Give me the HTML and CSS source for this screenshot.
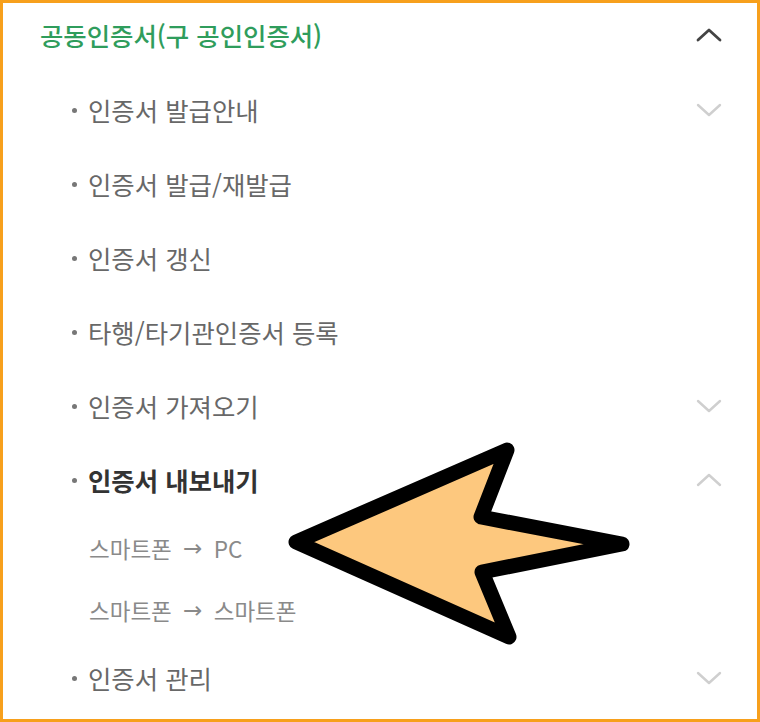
FILE: index.html
```html
<!DOCTYPE html>
<html lang="ko">
<head>
<meta charset="utf-8">
<link rel="stylesheet" href="styles.css">
</head>
<body>
<div class="frame">
  <div class="menu">
    <div class="head">
      <span class="head-title">공동인증서(구 공인인증서)</span>
      <svg class="chev chev-dark" viewBox="0 0 26 14"><polyline points="2,12 13,2 24,12"/></svg>
    </div>
    <div class="item"><span class="label">인증서 발급안내</span><svg class="chev" viewBox="0 0 26 14"><polyline points="2,2 13,12 24,2"/></svg></div>
    <div class="item"><span class="label">인증서 발급/재발급</span></div>
    <div class="item"><span class="label">인증서 갱신</span></div>
    <div class="item"><span class="label">타행/타기관인증서 등록</span></div>
    <div class="item"><span class="label">인증서 가져오기</span><svg class="chev" viewBox="0 0 26 14"><polyline points="2,2 13,12 24,2"/></svg></div>
    <div class="item active"><span class="label">인증서 내보내기</span><svg class="chev" viewBox="0 0 26 14"><polyline points="2,12 13,2 24,12"/></svg></div>
    <div class="sub">스마트폰 <span class="to">→</span> PC</div>
    <div class="sub">스마트폰 <span class="to">→</span> 스마트폰</div>
    <div class="item"><span class="label">인증서 관리</span><svg class="chev" viewBox="0 0 26 14"><polyline points="2,2 13,12 24,2"/></svg></div>
  </div>
  <svg class="pointer" viewBox="0 0 760 722" width="760" height="722">
    <polygon points="296,542 507,450 481,517 622,544 482,572 509,637" />
  </svg>
</div>
</body>
</html>
```
FILE: styles.css
```css
html, body {
  margin: 0;
  padding: 0;
  background: #fff;
}
body {
  font-family: "Noto Sans CJK KR", "Noto Sans", sans-serif;
}
.frame {
  position: relative;
  width: 760px;
  height: 722px;
  box-sizing: border-box;
  border: 3px solid #f7a01c;
  overflow: hidden;
}
.menu {
  display: flex;
  flex-direction: column;
  padding: 0 35px 0 37px;
}
.head {
  height: 66px;
  padding-top: 0;
  margin-bottom: 4px;
  display: flex;
  align-items: center;
  justify-content: space-between;
}
.head-title {
  font-size: 25.4px;
  font-weight: 500;
  color: #2f9d5c;
  margin-top: -3px;
}
.item {
  height: 74px;
  display: flex;
  align-items: center;
  justify-content: space-between;
  padding-left: 34px;
  position: relative;
}
.item::before {
  content: "";
  position: absolute;
  left: 32px;
  top: 50%;
  width: 5px;
  height: 5px;
  margin-top: -2px;
  border-radius: 50%;
  background: #777;
}
.label {
  font-size: 25.4px;
  color: #686868;
  padding-left: 14px;
}
.item.active .label {
  color: #333;
  font-weight: 700;
}
.sub {
  height: 62px;
  display: flex;
  align-items: center;
  padding-left: 49px;
  font-size: 22.5px;
  color: #8a8a8a;
  white-space: pre;
}
.to {
  font-family: "DejaVu Sans", sans-serif;
  font-size: 23px;
  margin: 0 5px;
}
.chev {
  width: 26px;
  height: 14px;
  fill: none;
  stroke: #cfcfcf;
  stroke-width: 2.4;
  stroke-linecap: round;
  stroke-linejoin: round;
}
.chev-dark {
  stroke: #444;
  stroke-width: 2.8;
  margin-top: -3px;
}
.pointer {
  position: absolute;
  left: -3px;
  top: -3px;
  pointer-events: none;
}
.pointer polygon {
  fill: #fdc87e;
  stroke: #000;
  stroke-width: 15;
  stroke-linejoin: round;
}
```
